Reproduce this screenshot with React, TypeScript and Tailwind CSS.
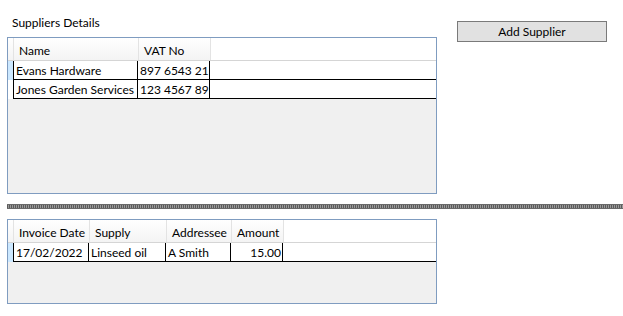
import React from 'react';

type Col = { title: string; width: number; align?: 'left' | 'right' };

interface GridProps {
  columns: Col[];
  rows: string[][];
  height: number;
}

// WinForms-style DataGridView
const DataGrid: React.FC<GridProps> = ({ columns, rows, height }) => {
  return (
    <div
      className="w-[430px] border border-[#7f9cc0] bg-[#f0f0f0] overflow-hidden"
      style={{ height }}
    >
      {/* Header */}
      <div className="flex h-[23px] bg-linear-to-b from-white to-[#f4f4f4] border-b border-[#d5d5d5]">
        <div className="w-[6px] shrink-0 border-r border-[#e3e3e3]" />
        {columns.map((c) => (
          <div
            key={c.title}
            className="shrink-0 flex items-center pt-[3px] pl-[5px] border-r border-[#e3e3e3] text-black whitespace-nowrap"
            style={{ width: c.width }}
          >
            {c.title}
          </div>
        ))}
        <div className="flex-1 bg-white" />
      </div>

      {/* Rows */}
      {rows.map((r, i) => (
        <div key={i} className="flex h-[19px]">
          <div className={`w-[5px] shrink-0 ${i === 0 ? 'bg-[#cce8ff]' : 'bg-white'}`} />
          <div className="flex flex-1 bg-white border-b border-l border-black">
            {columns.map((c, j) => (
              <div
                key={j}
                className={`shrink-0 flex items-center pt-[1px] border-r border-black whitespace-nowrap overflow-hidden ${
                  c.align === 'right' ? 'justify-end pr-[1px]' : 'pl-[2px]'
                }`}
                style={{ width: j === 0 ? c.width - 1 : c.width }}
              >
                {r[j]}
              </div>
            ))}
            <div className="flex-1" />
          </div>
        </div>
      ))}
    </div>
  );
};

export default function App() {
  return (
    <div className="w-[623px] h-[316px] bg-white text-[12px] text-black font-['Segoe_UI','Lato',sans-serif] leading-none">
      <div className="flex">
        <div className="ml-[7px]">
          <div className="h-[37px] pl-[5px] pt-[17px]">Suppliers Details</div>
          <DataGrid
            height={157}
            columns={[
              { title: 'Name', width: 125 },
              { title: 'VAT No', width: 72 },
            ]}
            rows={[
              ['Evans Hardware', '897 6543 21'],
              ['Jones Garden Services', '123 4567 89'],
            ]}
          />
        </div>
        <div className="ml-[20px] pt-[21px]">
          <button className="w-[150px] h-[21px] bg-[#e1e1e1] border border-[#7a7a7a] flex items-center justify-center pt-[1px]">
            Add Supplier
          </button>
        </div>
      </div>

      <div className="mt-[10px] ml-[7px] h-[5px] bg-[repeating-linear-gradient(90deg,#5a5a5a_0px,#5a5a5a_1px,#9a9a9a_1px,#9a9a9a_2px)] border-y border-[#6a6a6a]" />

      <div className="mt-[10px] ml-[7px]">
        <DataGrid
          height={85}
          columns={[
            { title: 'Invoice Date', width: 76 },
            { title: 'Supply', width: 77 },
            { title: 'Addressee', width: 65 },
            { title: 'Amount', width: 52, align: 'right' },
          ]}
          rows={[['17/02/2022', 'Linseed oil', 'A Smith', '15.00']]}
        />
      </div>
    </div>
  );
}
